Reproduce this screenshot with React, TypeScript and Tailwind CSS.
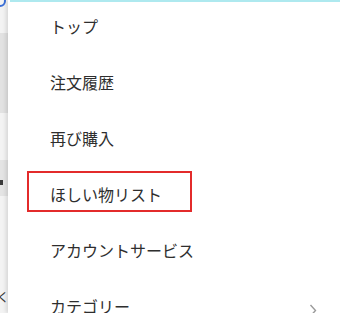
import React from 'react';

const items = ['トップ', '注文履歴', '再び購入', 'ほしい物リスト', 'アカウントサービス', 'カテゴリー'];

const App: React.FC = () => {
  return (
    <div
      className="w-[340px] h-[313px] flex overflow-hidden bg-white"
      style={{ fontFamily: '"Noto Sans CJK JP", "Noto Sans", sans-serif' }}
    >
      {/* page behind the drawer */}
      <div className="w-[8px] flex-shrink-0 bg-[#f3f3f3] flex flex-col relative">
        <div className="absolute -left-[6px] -top-[5px] w-[12px] h-[12px] rounded-full border-2 border-[#3b6fd8]"></div>
        <div className="mt-[33px] h-[80px] bg-[#e2e2e2]"></div>
        <div className="mt-[47px] h-[36px] bg-[#e4e4e4] relative">
          <div className="absolute left-0 top-[20px] w-[3px] h-[5px] bg-[#3a3a3a]"></div>
        </div>
        <div className="mt-auto mb-[10px] text-[12px] leading-none text-[#333] -ml-[3px]">く</div>
      </div>

      {/* drawer */}
      <div className="flex-1 bg-white shadow-[-2px_0_4px_rgba(0,0,0,0.12)] relative">
        <div className="ml-[2px] h-[2px] bg-[#aee9ef]"></div>
        <ul className="-mt-[4px]">
          {items.map((label, i) => (
            <li key={label} className="h-[56px] flex items-center justify-between text-[16px] text-[#2e2e2e]">
              {i === 3 ? (
                <div className="ml-[19px] w-[165px] h-[41px] border-2 border-[#e32b2b] flex items-center pl-[21px] -mt-[5px]">
                  <span className="mt-[5px]">{label}</span>
                </div>
              ) : (
                <span className="ml-[42px]">{label}</span>
              )}
              {i === 5 && (
                <svg width="8" height="13" viewBox="0 0 8 13" className="mr-[23px] mt-[8px]">
                  <path d="M1.5 1 L6.5 6.5 L1.5 12" fill="none" stroke="#9a9a9a" strokeWidth="1.4" />
                </svg>
              )}
            </li>
          ))}
        </ul>
      </div>
    </div>
  );
};

export default App;
